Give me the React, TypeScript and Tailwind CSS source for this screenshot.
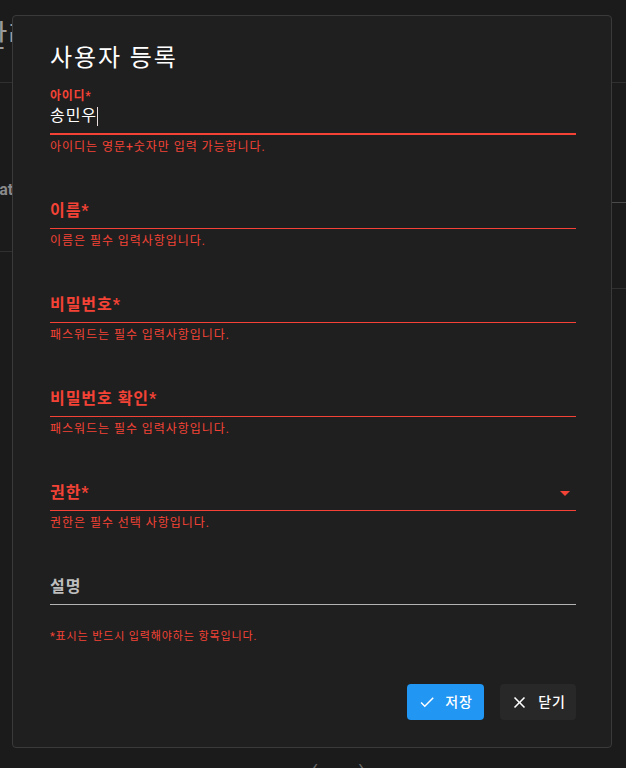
import React from 'react';

const font = { fontFamily: 'Roboto, "Noto Sans CJK KR", sans-serif' };

function CheckIcon() {
  return (
    <svg viewBox="0 0 24 24" className="w-[18px] h-[18px] fill-white">
      <path d="M9 16.17L4.83 12l-1.42 1.41L9 19 21 7l-1.41-1.41z" />
    </svg>
  );
}

function CloseIcon() {
  return (
    <svg viewBox="0 0 24 24" className="w-[19px] h-[19px] fill-white">
      <path d="M19 6.41L17.59 5 12 10.59 6.41 5 5 6.41 10.59 12 5 17.59 6.41 19 12 13.41 17.59 19 19 17.59 13.41 12z" />
    </svg>
  );
}

function ArrowDropDown() {
  return (
    <svg viewBox="0 0 24 24" className="w-6 h-6 fill-[#f44336] mr-[-1px]">
      <path d="M7 10l5 5 5-5z" />
    </svg>
  );
}

// unfocused field, label sits where the value would be
function Field({ label, helper, select }: { label: string; helper: string; select?: boolean }) {
  return (
    <div className="h-[94px] pt-4">
      <div className="flex items-center h-[29px] pb-[5px]">
        <span className="flex-1 text-base leading-6 font-bold tracking-[0.06em] text-[#f44336]">{label}</span>
        {select && <ArrowDropDown />}
      </div>
      <div className="h-px bg-[#f44336]" />
      <p className="mt-1 text-xs leading-4 tracking-[0.08em] text-[#f44336]">{helper}</p>
    </div>
  );
}

export default function App() {
  return (
    <div className="relative h-[768px] overflow-hidden bg-[#1b1b1b]" style={font}>
      {/* page behind the dialog */}
      <div className="h-[83px] border-b border-[#303030] pt-[18px]">
        <h1 className="ml-[-20px] text-[30px] leading-9 text-[#9a9a9a]">관리</h1>
      </div>
      <div className="flex">
        <div className="w-1/2 h-[169px] border-b border-[#303030] pt-[95px]">
          <span className="ml-[-16px] text-base font-bold text-[#8a8a8a]">Stat</span>
        </div>
        <div className="w-1/2">
          <div className="h-[120px] border-b border-[#4a4a4a]" />
          <div className="h-[86px] border-b border-[#303030]" />
        </div>
      </div>
      <div className="absolute left-[50px] right-0 bottom-[-14px] flex justify-center gap-[40px] text-[20px] text-[#6a6a6a]">
        <span>‹</span>
        <span>›</span>
      </div>

      {/* Dialog */}
      <div className="absolute left-[12px] top-[15px] w-[600px] bg-[#1f1f1f] border border-[#3a3a3a] rounded pt-[26px] pl-[37px] pr-[35px] pb-[27px]">
        <h2 className="text-2xl leading-8 tracking-[0.08em] text-white mb-[14px]">사용자 등록</h2>

        {/* focused id field */}
        <div className="h-[95px]">
          <label className="block text-xs leading-4 font-bold tracking-[0.06em] text-[#f44336]">아이디*</label>
          <div className="flex items-center h-[29px] pb-[5px]">
            <span className="text-base leading-6 tracking-[0.06em] text-white">송민우</span>
            <span className="w-px h-[19px] bg-[#e8dede]" />
          </div>
          <div className="h-[2px] bg-[#f44336]" />
          <p className="mt-1 text-xs leading-4 tracking-[0.08em] text-[#f44336]">아이디는 영문+숫자만 입력 가능합니다.</p>
        </div>

        <Field label="이름*" helper="이름은 필수 입력사항입니다." />
        <Field label="비밀번호*" helper="패스워드는 필수 입력사항입니다." />
        <Field label="비밀번호 확인*" helper="패스워드는 필수 입력사항입니다." />
        <Field label="권한*" helper="권한은 필수 선택 사항입니다." select />

        <div className="pt-4">
          <div className="h-[29px] pb-[5px]">
            <span className="text-base leading-6 font-bold tracking-[0.06em] text-[#bdbdbd]">설명</span>
          </div>
          <div className="h-px bg-[#b3b3b3]" />
        </div>

        <p className="mt-6 text-[11px] leading-4 tracking-[0.08em] text-[#f44336]">*표시는 반드시 입력해야하는 항목입니다.</p>

        <div className="mt-[39px] flex justify-end gap-4">
          <button className="w-[77px] h-9 flex items-center justify-center gap-[9px] rounded bg-[#2196f3] text-white text-sm font-medium tracking-[0.06em]">
            <CheckIcon />
            저장
          </button>
          <button className="w-[76px] h-9 flex items-center justify-center gap-[9px] rounded bg-[#282828] text-white text-sm font-medium tracking-[0.06em]">
            <CloseIcon />
            닫기
          </button>
        </div>
      </div>
    </div>
  );
}
